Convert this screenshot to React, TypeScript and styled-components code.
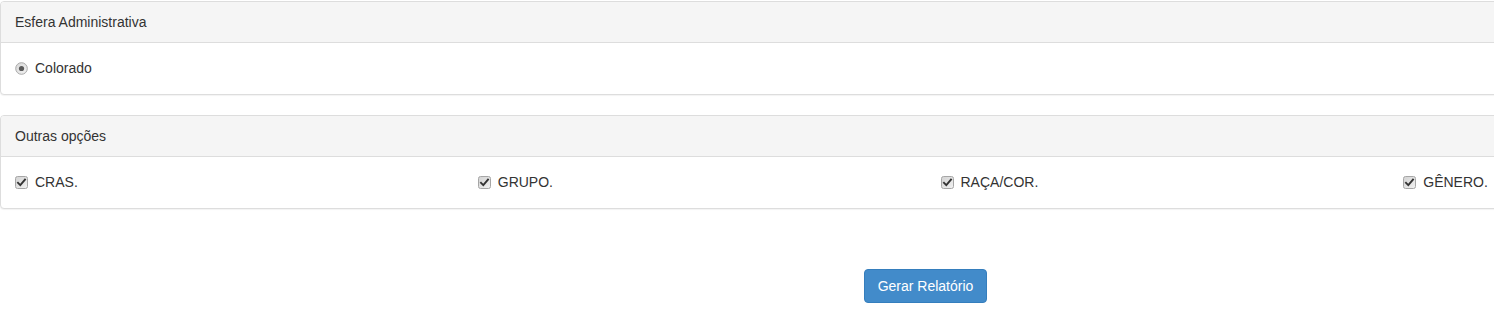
import React from "react";
import styled, { createGlobalStyle } from "styled-components";

const GlobalStyle = createGlobalStyle`
  html, body {
    margin: 0;
    padding: 0;
    overflow: hidden;
    background: #fff;
  }
  body {
    font-family: "Liberation Sans", Arial, Helvetica, sans-serif;
    font-size: 14px;
    line-height: 20px;
    color: #333;
  }
  * { box-sizing: border-box; }
`;

const Page = styled.div`
  width: 1851px;
  padding-top: 1px;
`;

const Panel = styled.section`
  background: #fff;
  border: 1px solid #ddd;
  border-radius: 4px;
  box-shadow: 0 1px 1px rgba(0, 0, 0, 0.05);
  margin-bottom: 20px;
`;

const PanelHeading = styled.div`
  background: #f5f5f5;
  border-bottom: 1px solid #ddd;
  border-radius: 3px 3px 0 0;
  padding: 10px 14px;
  height: 41px;
  color: #333;
`;

const PanelBody = styled.div`
  padding: 15px 14px 16px;
`;

const OptionRow = styled.div`
  display: flex;
  margin: 0 -15px;
`;

const OptionCol = styled.div`
  width: 25%;
  padding: 0 15px;
`;

const Label = styled.label`
  display: flex;
  align-items: center;
  gap: 7px;
  height: 20px;
  cursor: pointer;
`;

const Mark = styled.svg`
  flex: none;
  width: 13px;
  height: 13px;
  display: block;
`;

const Actions = styled.div`
  display: flex;
  justify-content: center;
  padding-top: 40px;
`;

const Button = styled.button`
  font-family: "Liberation Sans", Arial, Helvetica, sans-serif;
  font-size: 14px;
  line-height: 20px;
  padding: 6px 13px;
  height: 34px;
  color: #fff;
  background: #428bca;
  border: 1px solid #357ebd;
  border-radius: 4px;
  cursor: pointer;
`;

const Radio = () => (
  <Mark viewBox="0 0 13 13">
    <defs>
      <linearGradient id="rg" x1="0" y1="0" x2="1" y2="1">
        <stop offset="0" stopColor="#d6d6d6" />
        <stop offset="1" stopColor="#f4f4f4" />
      </linearGradient>
    </defs>
    <circle cx="6.5" cy="6.5" r="5.8" fill="url(#rg)" stroke="#a8a8a8" strokeWidth="1" />
    <circle cx="6.5" cy="6.5" r="2.6" fill="#5a5a5a" />
  </Mark>
);

const Check = () => (
  <Mark viewBox="0 0 13 13">
    <defs>
      <linearGradient id="cg" x1="0" y1="0" x2="1" y2="1">
        <stop offset="0" stopColor="#d2d2d2" />
        <stop offset="1" stopColor="#f2f2f2" />
      </linearGradient>
    </defs>
    <rect x="0.5" y="0.5" width="12" height="12" rx="2" fill="url(#cg)" stroke="#a6a6a6" />
    <path d="M3 6.8 L5.3 9.2 L10 3.6" fill="none" stroke="#333" strokeWidth="1.9" strokeLinecap="square" />
  </Mark>
);

const options = ["CRAS.", "GRUPO.", "RAÇA/COR.", "GÊNERO."];

export default function App() {
  return (
    <Page>
      <GlobalStyle />
      <Panel>
        <PanelHeading>Esfera Administrativa</PanelHeading>
        <PanelBody>
          <Label>
            <Radio />
            Colorado
          </Label>
        </PanelBody>
      </Panel>
      <Panel>
        <PanelHeading>Outras opções</PanelHeading>
        <PanelBody>
          <OptionRow>
            {options.map((o) => (
              <OptionCol key={o}>
                <Label>
                  <Check />
                  {o}
                </Label>
              </OptionCol>
            ))}
          </OptionRow>
        </PanelBody>
      </Panel>
      <Actions>
        <Button>Gerar Relatório</Button>
      </Actions>
    </Page>
  );
}
